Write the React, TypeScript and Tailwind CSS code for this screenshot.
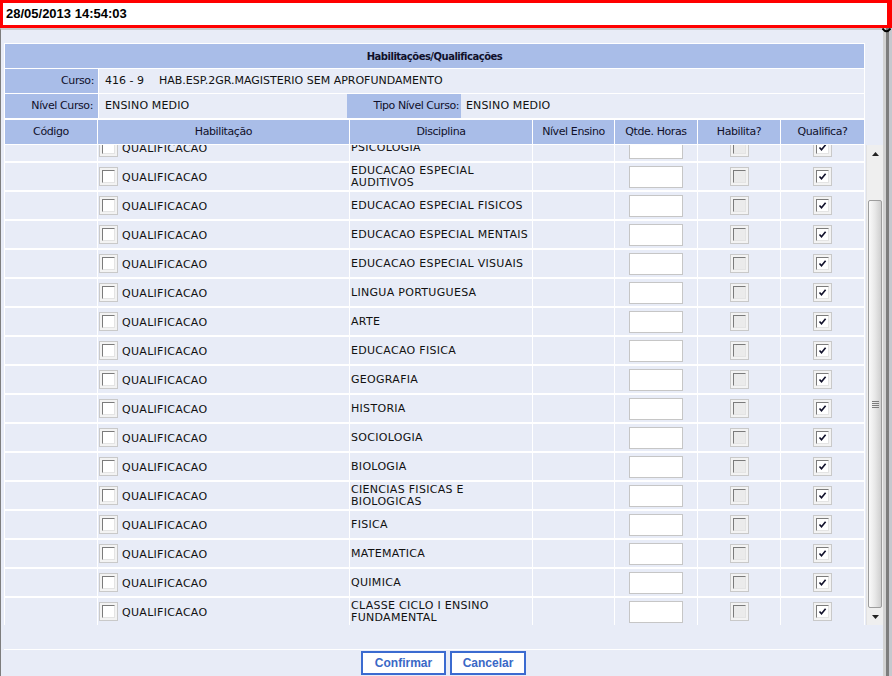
import React from 'react';

type Row = { disciplina: string[] };

const rows: Row[] = [
  { disciplina: ['PSICOLOGIA'] },
  { disciplina: ['EDUCACAO ESPECIAL', 'AUDITIVOS'] },
  { disciplina: ['EDUCACAO ESPECIAL FISICOS'] },
  { disciplina: ['EDUCACAO ESPECIAL MENTAIS'] },
  { disciplina: ['EDUCACAO ESPECIAL VISUAIS'] },
  { disciplina: ['LINGUA PORTUGUESA'] },
  { disciplina: ['ARTE'] },
  { disciplina: ['EDUCACAO FISICA'] },
  { disciplina: ['GEOGRAFIA'] },
  { disciplina: ['HISTORIA'] },
  { disciplina: ['SOCIOLOGIA'] },
  { disciplina: ['BIOLOGIA'] },
  { disciplina: ['CIENCIAS FISICAS E', 'BIOLOGICAS'] },
  { disciplina: ['FISICA'] },
  { disciplina: ['MATEMATICA'] },
  { disciplina: ['QUIMICA'] },
  { disciplina: ['CLASSE CICLO I ENSINO', 'FUNDAMENTAL'] },
];

const cols = 'grid grid-cols-[92px_251px_182px_81px_82px_82px_83px] gap-x-px';

function CheckBox({ checked = false, gray = false }: { checked?: boolean; gray?: boolean }) {
  return (
    <div className="w-[19px] h-[19px] border border-[#c9c9c9] bg-[#f3f3f3] flex items-center justify-center">
      <div
        className={`w-[13px] h-[13px] border-t border-l border-r border-b border-t-[#7b7b7b] border-l-[#7b7b7b] border-r-[#e4e4e4] border-b-[#e4e4e4] flex items-center justify-center ${
          gray ? 'bg-[#ebebeb]' : 'bg-white'
        }`}
      >
        {checked && (
          <svg width="9" height="9" viewBox="0 0 9 9">
            <path d="M1.5 4.5 L3.5 6.8 L7.6 1.8" fill="none" stroke="#10102a" strokeWidth="1.6" />
          </svg>
        )}
      </div>
    </div>
  );
}

function Scrollbar() {
  return (
    <div className="w-[17px] h-full flex flex-col bg-[#efefef] border-l border-[#e2e2e2]">
      <div className="h-[17px] flex items-center justify-center">
        <svg width="7" height="4" viewBox="0 0 7 4">
          <path d="M0 4 L3.5 0 L7 4 Z" fill="#222" />
        </svg>
      </div>
      <div className="flex-1 flex flex-col justify-end">
        <div className="h-[408px] mx-px rounded-[2px] border border-[#9d9d9d] bg-gradient-to-r from-[#fafafa] via-[#e8e8e8] to-[#cfcfcf] flex items-center justify-center">
          <div className="flex flex-col gap-px">
            <div className="w-[7px] h-px bg-[#7c7c7c]" />
            <div className="w-[7px] h-px bg-[#7c7c7c]" />
            <div className="w-[7px] h-px bg-[#7c7c7c]" />
            <div className="w-[7px] h-px bg-[#7c7c7c]" />
          </div>
        </div>
      </div>
      <div className="h-[17px] flex items-center justify-center">
        <svg width="7" height="4" viewBox="0 0 7 4">
          <path d="M0 0 L7 0 L3.5 4 Z" fill="#222" />
        </svg>
      </div>
    </div>
  );
}

export default function App() {
  return (
    <div className="w-[892px] h-[676px] overflow-hidden bg-white flex flex-col">
      <div className="h-[28px] shrink-0 border-[3px] border-r-[5px] border-[#ff0000] flex items-center pl-[3px] font-['Liberation_Sans',Arial,sans-serif] font-bold text-[13px] text-black">
        28/05/2013 14:54:03
      </div>

      <div className="flex flex-1 min-h-0 relative">
        <div className="w-[883px] shrink-0 bg-[#e8ecf7] border-l border-[#7d7d7d] border-t-2 border-t-[#c9c9c9] flex flex-col font-['DejaVu_Sans',Verdana,sans-serif] text-[11px] text-[#111]">
          <div className="pl-[3px] pt-[13px] flex flex-col">
            {/* cabeçalho */}
            <div className="w-[861px] bg-white p-px flex flex-col gap-px">
              <div className="h-[24px] bg-[#a9bde8] flex items-center justify-center font-bold text-[10px] tracking-[-0.5px] text-[#10102a]">
                Habilitações/Qualificações
              </div>
              <div className="h-[24px] flex gap-px">
                <div className="w-[93px] bg-[#a9bde8] flex items-center justify-end pr-[4px] tracking-[-0.4px] text-[#10102a]">
                  Curso:
                </div>
                <div className="flex-1 bg-[#e8ecf7] flex items-center pl-[6px]">
                  <span className="w-[54px]">416 - 9</span>
                  <span>HAB.ESP.2GR.MAGISTERIO SEM APROFUNDAMENTO</span>
                </div>
              </div>
              <div className="h-[24px] flex">
                <div className="w-[93px] bg-[#a9bde8] flex items-center justify-end pr-[5px] tracking-[-0.4px] text-[#10102a]">
                  Nível Curso:
                </div>
                <div className="w-[249px] border-l border-white bg-[#e8ecf7] flex items-center pl-[6px] tracking-[0.15px]">
                  ENSINO MEDIO
                </div>
                <div className="w-[114px] bg-[#a9bde8] flex items-center justify-end pr-[2px] whitespace-nowrap tracking-[-0.45px] text-[#10102a]">
                  Tipo Nível Curso:
                </div>
                <div className="flex-1 bg-[#e8ecf7] flex items-center pl-[5px] tracking-[0.15px]">ENSINO MEDIO</div>
              </div>
              <div className={`${cols} h-[24px] mt-px text-[#10102a] tracking-[-0.4px]`}>
                {['Código', 'Habilitação', 'Disciplina', 'Nível Ensino', 'Qtde. Horas', 'Habilita?', 'Qualifica?'].map((h) => (
                  <div key={h} className="bg-[#a9bde8] flex items-center justify-center whitespace-nowrap">
                    {h}
                  </div>
                ))}
              </div>
            </div>

            {/* corpo com rolagem */}
            <div className="flex h-[480px]">
              <div className="w-[861px] overflow-hidden bg-white px-px">
                <div className="-mt-[11px] flex flex-col gap-[2px] tracking-[0.3px]">
                  {rows.map((r, i) => (
                    <div key={i} className={`${cols} h-[27px]`}>
                      <div className="bg-[#e8ecf7]" />
                      <div className="bg-[#e8ecf7] flex items-center pl-px gap-[4px]">
                        <CheckBox />
                        <span className="pt-[3px]">QUALIFICACAO</span>
                      </div>
                      <div className="bg-[#e8ecf7] flex flex-col justify-center pl-[1px] leading-[12px]">
                        {r.disciplina.map((l) => (
                          <span key={l} className="whitespace-nowrap">
                            {l}
                          </span>
                        ))}
                      </div>
                      <div className="bg-[#e8ecf7]" />
                      <div className="bg-[#e8ecf7] flex items-center justify-center">
                        <div className="w-[54px] h-[22px] border border-[#c6c6c6] bg-white" />
                      </div>
                      <div className="bg-[#e8ecf7] flex items-center justify-center">
                        <CheckBox gray />
                      </div>
                      <div className="bg-[#e8ecf7] flex items-center justify-center">
                        <CheckBox checked />
                      </div>
                    </div>
                  ))}
                </div>
              </div>
              <div className="w-px" />
              <Scrollbar />
            </div>

            {/* rodapé */}
            <div className="h-[24px]" />
            <div className="h-px bg-white w-[879px]" />
            <div className="flex justify-center gap-[4px] pt-px font-['Liberation_Sans',Arial,sans-serif] font-bold text-[12px] text-[#3a68c6]">
              <button className="w-[85px] h-[24px] border-2 border-[#3b6bd0] bg-white">Confirmar</button>
              <button className="w-[76px] h-[24px] border-2 border-[#3b6bd0] bg-white">Cancelar</button>
            </div>
          </div>
        </div>

        <div className="w-[3px] bg-[#d2d2d2]" />
        <div className="w-[3px] bg-[#7d7d7d]" />
        <div className="w-[3px] bg-[#c6c8ce]" />

        <svg className="absolute left-[882px] top-0" width="9" height="6" viewBox="0 0 9 6">
          <path d="M0.5 0.5 Q4.5 6 8.5 0.5" fill="none" stroke="#000" strokeWidth="2" />
        </svg>
      </div>
    </div>
  );
}
